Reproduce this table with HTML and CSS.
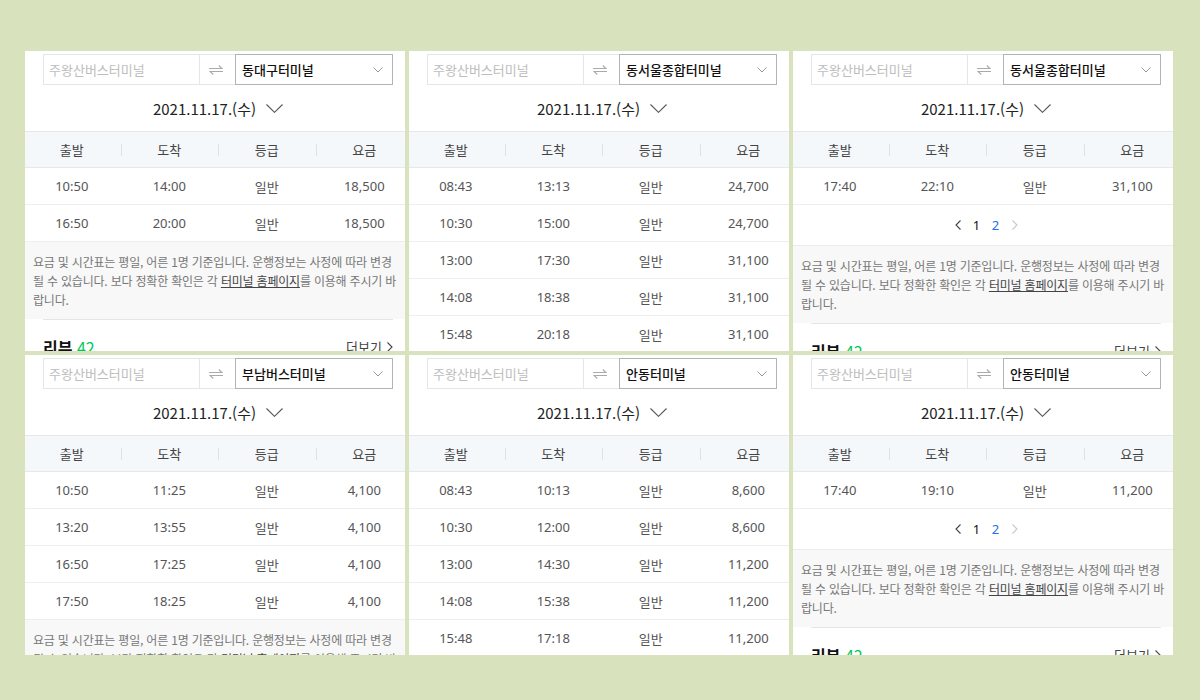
FILE: index.html
```html
<!DOCTYPE html>
<html lang="ko">
<head>
<meta charset="utf-8">
<title>버스 시간표</title>
<link rel="stylesheet" href="styles.css">
</head>
<body>
<div class="grid">

  <!-- Panel 1 -->
  <div class="panel"><div class="page">
    <div class="search">
      <div class="from"><span class="ph">주왕산버스터미널</span></div>
      <div class="swap"><svg width="14" height="10" viewBox="0 0 14 10"><path d="M0 3.5H13L9.8 0.5M14 6.5H1L4.2 9.5" fill="none" stroke="#aaa" stroke-width="1.1"/></svg></div>
      <div class="to"><span class="to-name">동대구터미널</span><svg class="sel-chev" width="10" height="6" viewBox="0 0 10 6"><path d="M0.5 0.5L5 5L9.5 0.5" fill="none" stroke="#999" stroke-width="1"/></svg></div>
    </div>
    <div class="date"><span>2021.11.17.(수)</span><svg width="17" height="9" viewBox="0 0 17 9"><path d="M0.5 0.5L8.5 8.3L16.5 0.5" fill="none" stroke="#555" stroke-width="1.1"/></svg></div>
    <div class="thead"><span>출발</span><span>도착</span><span>등급</span><span>요금</span></div>
    <div class="row"><span>10:50</span><span>14:00</span><span>일반</span><span>18,500</span></div>
    <div class="row"><span>16:50</span><span>20:00</span><span>일반</span><span>18,500</span></div>
    <div class="notice">요금 및 시간표는 평일, 어른 1명 기준입니다. 운행정보는 사정에 따라 변경될 수 있습니다. 보다 정확한 확인은 각 <u>터미널 홈페이지</u>를 이용해 주시기 바랍니다.</div>
    <div class="review"><span class="rv-title">리뷰 <em>42</em></span><span class="more">더보기 <svg width="6" height="10" viewBox="0 0 6 10"><path d="M0.5 0.5L5 5L0.5 9.5" fill="none" stroke="#444" stroke-width="1.1"/></svg></span></div>
  </div></div>

  <!-- Panel 2 -->
  <div class="panel"><div class="page">
    <div class="search">
      <div class="from"><span class="ph">주왕산버스터미널</span></div>
      <div class="swap"><svg width="14" height="10" viewBox="0 0 14 10"><path d="M0 3.5H13L9.8 0.5M14 6.5H1L4.2 9.5" fill="none" stroke="#aaa" stroke-width="1.1"/></svg></div>
      <div class="to"><span class="to-name">동서울종합터미널</span><svg class="sel-chev" width="10" height="6" viewBox="0 0 10 6"><path d="M0.5 0.5L5 5L9.5 0.5" fill="none" stroke="#999" stroke-width="1"/></svg></div>
    </div>
    <div class="date"><span>2021.11.17.(수)</span><svg width="17" height="9" viewBox="0 0 17 9"><path d="M0.5 0.5L8.5 8.3L16.5 0.5" fill="none" stroke="#555" stroke-width="1.1"/></svg></div>
    <div class="thead"><span>출발</span><span>도착</span><span>등급</span><span>요금</span></div>
    <div class="row"><span>08:43</span><span>13:13</span><span>일반</span><span>24,700</span></div>
    <div class="row"><span>10:30</span><span>15:00</span><span>일반</span><span>24,700</span></div>
    <div class="row"><span>13:00</span><span>17:30</span><span>일반</span><span>31,100</span></div>
    <div class="row"><span>14:08</span><span>18:38</span><span>일반</span><span>31,100</span></div>
    <div class="row"><span>15:48</span><span>20:18</span><span>일반</span><span>31,100</span></div>
  </div></div>

  <!-- Panel 3 -->
  <div class="panel"><div class="page">
    <div class="search">
      <div class="from"><span class="ph">주왕산버스터미널</span></div>
      <div class="swap"><svg width="14" height="10" viewBox="0 0 14 10"><path d="M0 3.5H13L9.8 0.5M14 6.5H1L4.2 9.5" fill="none" stroke="#aaa" stroke-width="1.1"/></svg></div>
      <div class="to"><span class="to-name">동서울종합터미널</span><svg class="sel-chev" width="10" height="6" viewBox="0 0 10 6"><path d="M0.5 0.5L5 5L9.5 0.5" fill="none" stroke="#999" stroke-width="1"/></svg></div>
    </div>
    <div class="date"><span>2021.11.17.(수)</span><svg width="17" height="9" viewBox="0 0 17 9"><path d="M0.5 0.5L8.5 8.3L16.5 0.5" fill="none" stroke="#555" stroke-width="1.1"/></svg></div>
    <div class="thead"><span>출발</span><span>도착</span><span>등급</span><span>요금</span></div>
    <div class="row"><span>17:40</span><span>22:10</span><span>일반</span><span>31,100</span></div>
    <div class="pager">
      <span class="pg-arrow"><svg width="6" height="10" viewBox="0 0 6 10"><path d="M5.5 0.5L1 5L5.5 9.5" fill="none" stroke="#444" stroke-width="1.1"/></svg></span>
      <span class="pg-num cur">1</span>
      <span class="pg-num">2</span>
      <span class="pg-arrow"><svg width="6" height="10" viewBox="0 0 6 10"><path d="M0.5 0.5L5 5L0.5 9.5" fill="none" stroke="#c8c8c8" stroke-width="1.1"/></svg></span>
    </div>
    <div class="notice">요금 및 시간표는 평일, 어른 1명 기준입니다. 운행정보는 사정에 따라 변경될 수 있습니다. 보다 정확한 확인은 각 <u>터미널 홈페이지</u>를 이용해 주시기 바랍니다.</div>
    <div class="review"><span class="rv-title">리뷰 <em>42</em></span><span class="more">더보기 <svg width="6" height="10" viewBox="0 0 6 10"><path d="M0.5 0.5L5 5L0.5 9.5" fill="none" stroke="#444" stroke-width="1.1"/></svg></span></div>
  </div></div>

  <!-- Panel 4 -->
  <div class="panel"><div class="page">
    <div class="search">
      <div class="from"><span class="ph">주왕산버스터미널</span></div>
      <div class="swap"><svg width="14" height="10" viewBox="0 0 14 10"><path d="M0 3.5H13L9.8 0.5M14 6.5H1L4.2 9.5" fill="none" stroke="#aaa" stroke-width="1.1"/></svg></div>
      <div class="to"><span class="to-name">부남버스터미널</span><svg class="sel-chev" width="10" height="6" viewBox="0 0 10 6"><path d="M0.5 0.5L5 5L9.5 0.5" fill="none" stroke="#999" stroke-width="1"/></svg></div>
    </div>
    <div class="date"><span>2021.11.17.(수)</span><svg width="17" height="9" viewBox="0 0 17 9"><path d="M0.5 0.5L8.5 8.3L16.5 0.5" fill="none" stroke="#555" stroke-width="1.1"/></svg></div>
    <div class="thead"><span>출발</span><span>도착</span><span>등급</span><span>요금</span></div>
    <div class="row"><span>10:50</span><span>11:25</span><span>일반</span><span>4,100</span></div>
    <div class="row"><span>13:20</span><span>13:55</span><span>일반</span><span>4,100</span></div>
    <div class="row"><span>16:50</span><span>17:25</span><span>일반</span><span>4,100</span></div>
    <div class="row"><span>17:50</span><span>18:25</span><span>일반</span><span>4,100</span></div>
    <div class="notice">요금 및 시간표는 평일, 어른 1명 기준입니다. 운행정보는 사정에 따라 변경될 수 있습니다. 보다 정확한 확인은 각 <u>터미널 홈페이지</u>를 이용해 주시기 바랍니다.</div>
  </div></div>

  <!-- Panel 5 -->
  <div class="panel"><div class="page">
    <div class="search">
      <div class="from"><span class="ph">주왕산버스터미널</span></div>
      <div class="swap"><svg width="14" height="10" viewBox="0 0 14 10"><path d="M0 3.5H13L9.8 0.5M14 6.5H1L4.2 9.5" fill="none" stroke="#aaa" stroke-width="1.1"/></svg></div>
      <div class="to"><span class="to-name">안동터미널</span><svg class="sel-chev" width="10" height="6" viewBox="0 0 10 6"><path d="M0.5 0.5L5 5L9.5 0.5" fill="none" stroke="#999" stroke-width="1"/></svg></div>
    </div>
    <div class="date"><span>2021.11.17.(수)</span><svg width="17" height="9" viewBox="0 0 17 9"><path d="M0.5 0.5L8.5 8.3L16.5 0.5" fill="none" stroke="#555" stroke-width="1.1"/></svg></div>
    <div class="thead"><span>출발</span><span>도착</span><span>등급</span><span>요금</span></div>
    <div class="row"><span>08:43</span><span>10:13</span><span>일반</span><span>8,600</span></div>
    <div class="row"><span>10:30</span><span>12:00</span><span>일반</span><span>8,600</span></div>
    <div class="row"><span>13:00</span><span>14:30</span><span>일반</span><span>11,200</span></div>
    <div class="row"><span>14:08</span><span>15:38</span><span>일반</span><span>11,200</span></div>
    <div class="row"><span>15:48</span><span>17:18</span><span>일반</span><span>11,200</span></div>
  </div></div>

  <!-- Panel 6 -->
  <div class="panel"><div class="page">
    <div class="search">
      <div class="from"><span class="ph">주왕산버스터미널</span></div>
      <div class="swap"><svg width="14" height="10" viewBox="0 0 14 10"><path d="M0 3.5H13L9.8 0.5M14 6.5H1L4.2 9.5" fill="none" stroke="#aaa" stroke-width="1.1"/></svg></div>
      <div class="to"><span class="to-name">안동터미널</span><svg class="sel-chev" width="10" height="6" viewBox="0 0 10 6"><path d="M0.5 0.5L5 5L9.5 0.5" fill="none" stroke="#999" stroke-width="1"/></svg></div>
    </div>
    <div class="date"><span>2021.11.17.(수)</span><svg width="17" height="9" viewBox="0 0 17 9"><path d="M0.5 0.5L8.5 8.3L16.5 0.5" fill="none" stroke="#555" stroke-width="1.1"/></svg></div>
    <div class="thead"><span>출발</span><span>도착</span><span>등급</span><span>요금</span></div>
    <div class="row"><span>17:40</span><span>19:10</span><span>일반</span><span>11,200</span></div>
    <div class="pager">
      <span class="pg-arrow"><svg width="6" height="10" viewBox="0 0 6 10"><path d="M5.5 0.5L1 5L5.5 9.5" fill="none" stroke="#444" stroke-width="1.1"/></svg></span>
      <span class="pg-num cur">1</span>
      <span class="pg-num">2</span>
      <span class="pg-arrow"><svg width="6" height="10" viewBox="0 0 6 10"><path d="M0.5 0.5L5 5L0.5 9.5" fill="none" stroke="#c8c8c8" stroke-width="1.1"/></svg></span>
    </div>
    <div class="notice">요금 및 시간표는 평일, 어른 1명 기준입니다. 운행정보는 사정에 따라 변경될 수 있습니다. 보다 정확한 확인은 각 <u>터미널 홈페이지</u>를 이용해 주시기 바랍니다.</div>
    <div class="review"><span class="rv-title">리뷰 <em>42</em></span><span class="more">더보기 <svg width="6" height="10" viewBox="0 0 6 10"><path d="M0.5 0.5L5 5L0.5 9.5" fill="none" stroke="#444" stroke-width="1.1"/></svg></span></div>
  </div></div>

</div>
</body>
</html>
```

FILE: styles.css
```css
* { box-sizing: border-box; }

html, body {
  margin: 0;
  padding: 0;
  background: #d8e3bd;
}

body {
  font-family: "Noto Sans CJK KR", "Noto Sans", sans-serif;
  color: #222;
}

.grid {
  display: grid;
  grid-template-columns: repeat(3, 380px);
  grid-template-rows: 300px 300px;
  column-gap: 4px;
  row-gap: 4px;
  padding: 51px 0 0 25px;
}

.panel {
  background: #fff;
  overflow: hidden;
}

.page {
  width: 390px;
  margin-left: -2px;
}

/* search */
.search {
  display: flex;
  height: 31px;
  margin: 3px 20px 0;
}

.from {
  width: 157px;
  border: 1px solid #e6e6e6;
  display: flex;
  align-items: center;
  padding-left: 5px;
}

.ph {
  font-size: 13px;
  color: #bdbdbd;
}

.swap {
  width: 35px;
  border-top: 1px solid #e6e6e6;
  border-bottom: 1px solid #e6e6e6;
  display: flex;
  align-items: center;
  justify-content: center;
}

.swap svg { margin-left: -3px; }

.to {
  flex: 1;
  border: 1px solid #b3b3b3;
  display: flex;
  align-items: center;
  justify-content: space-between;
  padding: 0 9px 0 6px;
}

.to-name {
  font-size: 13px;
  font-weight: 500;
  color: #111;
}

/* date */
.date {
  height: 46px;
  display: flex;
  align-items: center;
  justify-content: center;
  gap: 10px;
  font-size: 15px;
  color: #222;
}

.date svg { margin-top: 1px; }

/* table */
.thead, .row {
  display: grid;
  grid-template-columns: repeat(4, 1fr);
  height: 37px;
  align-items: center;
  text-align: center;
  font-size: 13px;
}

.thead {
  background: #f5f8fa;
  border-top: 1px solid #e4e8ec;
  border-bottom: 1px solid #e6e9ec;
  color: #444;
}

.thead span { position: relative; }

.thead span + span::before {
  content: "";
  position: absolute;
  left: 0;
  top: 50%;
  width: 1px;
  height: 12px;
  margin-top: -6px;
  background: #dde2e6;
}

.row {
  border-bottom: 1px solid #eeeeee;
  color: #555;
  font-family: "Noto Sans", "Noto Sans CJK KR", sans-serif;
}

/* pager */
.pager {
  height: 41px;
  display: flex;
  align-items: center;
  justify-content: center;
  border-bottom: 1px solid #ececec;
  font-size: 13px;
  font-family: "Noto Sans", sans-serif;
}

.pg-arrow, .pg-num {
  width: 19px;
  display: flex;
  justify-content: center;
  align-items: center;
}

.pg-num { color: #1a6fe8; }
.pg-num.cur { color: #111; }

/* notice */
.notice {
  background: #f8f8f8;
  padding: 10px 12px 10px 10px;
  font-size: 12px;
  line-height: 19px;
  letter-spacing: -0.2px;
  color: #777;
}

.notice u {
  color: #444;
  text-underline-offset: 1px;
}

/* review */
.review {
  margin: 0 20px;
  border-top: 1px solid #e5e5e5;
  padding-top: 17px;
  display: flex;
  justify-content: space-between;
  align-items: center;
  line-height: 20px;
}

.rv-title {
  font-size: 16px;
  font-weight: 700;
  color: #111;
}

.rv-title em {
  font-style: normal;
  font-weight: 400;
  color: #03c75a;
}

.more {
  font-size: 13px;
  color: #444;
  display: flex;
  align-items: center;
  gap: 5px;
}
```
